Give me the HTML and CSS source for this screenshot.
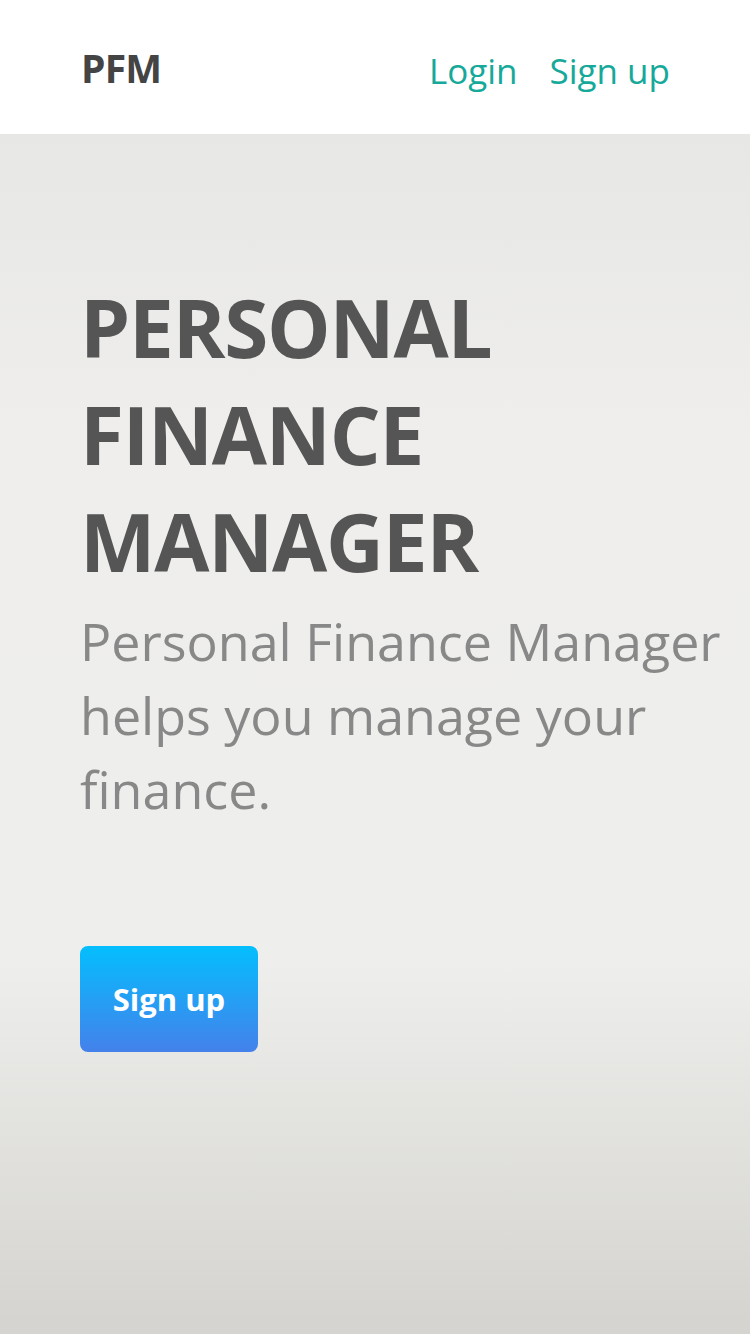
FILE: index.html
```html
<!DOCTYPE html>
<html lang="en">
<head>
<meta charset="utf-8">
<title>PFM</title>
<link rel="stylesheet" href="styles.css">
</head>
<body>
<header class="topbar">
  <div class="brand">PFM</div>
  <nav class="nav">
    <a class="nav-link" href="#">Login</a>
    <a class="nav-link" href="#">Sign up</a>
  </nav>
</header>
<main class="hero">
  <h1 class="hero-title">PERSONAL FINANCE MANAGER</h1>
  <p class="hero-sub">Personal Finance Manager helps you manage your finance.</p>
  <a class="cta" href="#">Sign up</a>
</main>
</body>
</html>
```
FILE: styles.css
```css
* { box-sizing: border-box; }
html, body { margin: 0; padding: 0; }
body {
  font-family: "Open Sans", "Noto Sans", sans-serif;
  width: 750px;
}
.topbar {
  height: 134px;
  background: #fff;
  display: flex;
  align-items: center;
  justify-content: space-between;
  padding: 0 80px 0 81px;
}
.brand {
  font-weight: 700;
  font-size: 39px;
  color: #444;
  letter-spacing: -0.8px;
}
.nav {
  display: flex;
  gap: 32px;
  margin-top: 6px;
}
.nav-link {
  color: #16a99a;
  text-decoration: none;
  font-size: 35px;
  font-weight: 400;
}
.hero {
  height: 1200px;
  background: linear-gradient(to top, #d5d4d0 0%, #d5d4d0 1%, #eeeeec 31%, #efeeec 75%, #e7e7e5 100%);
  padding: 139px 0 0 80px;
}
.hero-title {
  margin: 0;
  font-size: 80px;
  line-height: 107px;
  font-weight: 700;
  color: #555;
  letter-spacing: -1.2px;
  width: 450px;
}
.hero-sub {
  margin: 10px 0 0;
  font-size: 52px;
  line-height: 74px;
  color: #888;
  width: 670px;
  font-weight: 400;
}
.cta {
  display: inline-flex;
  align-items: center;
  justify-content: center;
  margin-top: 120px;
  width: 178px;
  height: 106px;
  border-radius: 8px;
  background: linear-gradient(to top, #4481eb 0%, #04befe 100%);
  color: #fff;
  font-weight: 700;
  font-size: 31px;
  text-decoration: none;
}
```
